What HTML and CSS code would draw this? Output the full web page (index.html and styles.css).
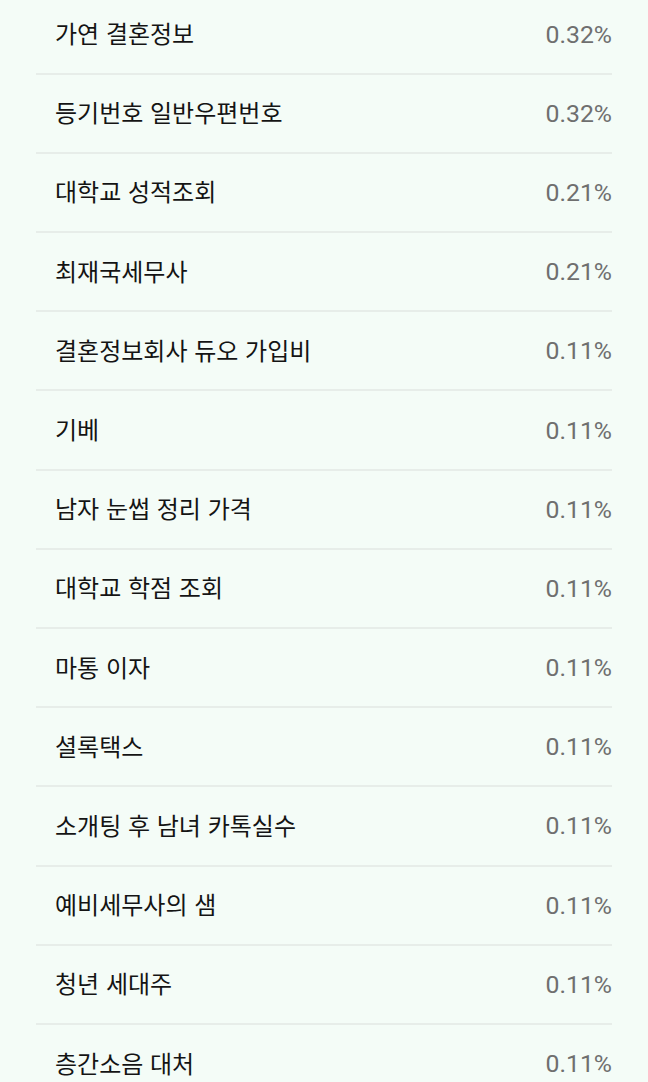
FILE: index.html
```html
<!DOCTYPE html>
<html lang="ko">
<head>
  <meta charset="UTF-8" />
  <meta name="viewport" content="width=device-width, initial-scale=1.0" />
  <title>검색어 비율</title>
  <link rel="stylesheet" href="styles.css">
</head>
<body>
  <ul class="keyword-list">
    <li class="keyword-row"><span class="keyword">가연 결혼정보</span><span class="ratio">0.32%</span></li>
    <li class="keyword-row"><span class="keyword">등기번호 일반우편번호</span><span class="ratio">0.32%</span></li>
    <li class="keyword-row"><span class="keyword">대학교 성적조회</span><span class="ratio">0.21%</span></li>
    <li class="keyword-row"><span class="keyword">최재국세무사</span><span class="ratio">0.21%</span></li>
    <li class="keyword-row"><span class="keyword">결혼정보회사 듀오 가입비</span><span class="ratio">0.11%</span></li>
    <li class="keyword-row"><span class="keyword">기베</span><span class="ratio">0.11%</span></li>
    <li class="keyword-row"><span class="keyword">남자 눈썹 정리 가격</span><span class="ratio">0.11%</span></li>
    <li class="keyword-row"><span class="keyword">대학교 학점 조회</span><span class="ratio">0.11%</span></li>
    <li class="keyword-row"><span class="keyword">마통 이자</span><span class="ratio">0.11%</span></li>
    <li class="keyword-row"><span class="keyword">셜록택스</span><span class="ratio">0.11%</span></li>
    <li class="keyword-row"><span class="keyword">소개팅 후 남녀 카톡실수</span><span class="ratio">0.11%</span></li>
    <li class="keyword-row"><span class="keyword">예비세무사의 샘</span><span class="ratio">0.11%</span></li>
    <li class="keyword-row"><span class="keyword">청년 세대주</span><span class="ratio">0.11%</span></li>
    <li class="keyword-row"><span class="keyword">층간소음 대처</span><span class="ratio">0.11%</span></li>
  </ul>
</body>
</html>
```

FILE: styles.css
```css
body {
  margin: 0;
  background-color: #f4fcf7;
  font-family: Roboto, "Noto Sans CJK KR", sans-serif;
  overflow: hidden;
}
.keyword-list {
  list-style: none;
  margin: -4.5px 36px 0 36px;
  padding: 0;
}
.keyword-row {
  display: flex;
  justify-content: space-between;
  align-items: center;
  height: 77.2px;
  padding-left: 19px;
  border-bottom: 2px solid #e7ede9;
}
.keyword {
  font-family: "Noto Sans CJK KR", sans-serif;
  font-size: 24px;
  color: #141414;
  padding-bottom: 3px;
}
.ratio {
  font-family: Roboto, sans-serif;
  font-size: 24.8px;
  color: #6f6f6f;
}
```
